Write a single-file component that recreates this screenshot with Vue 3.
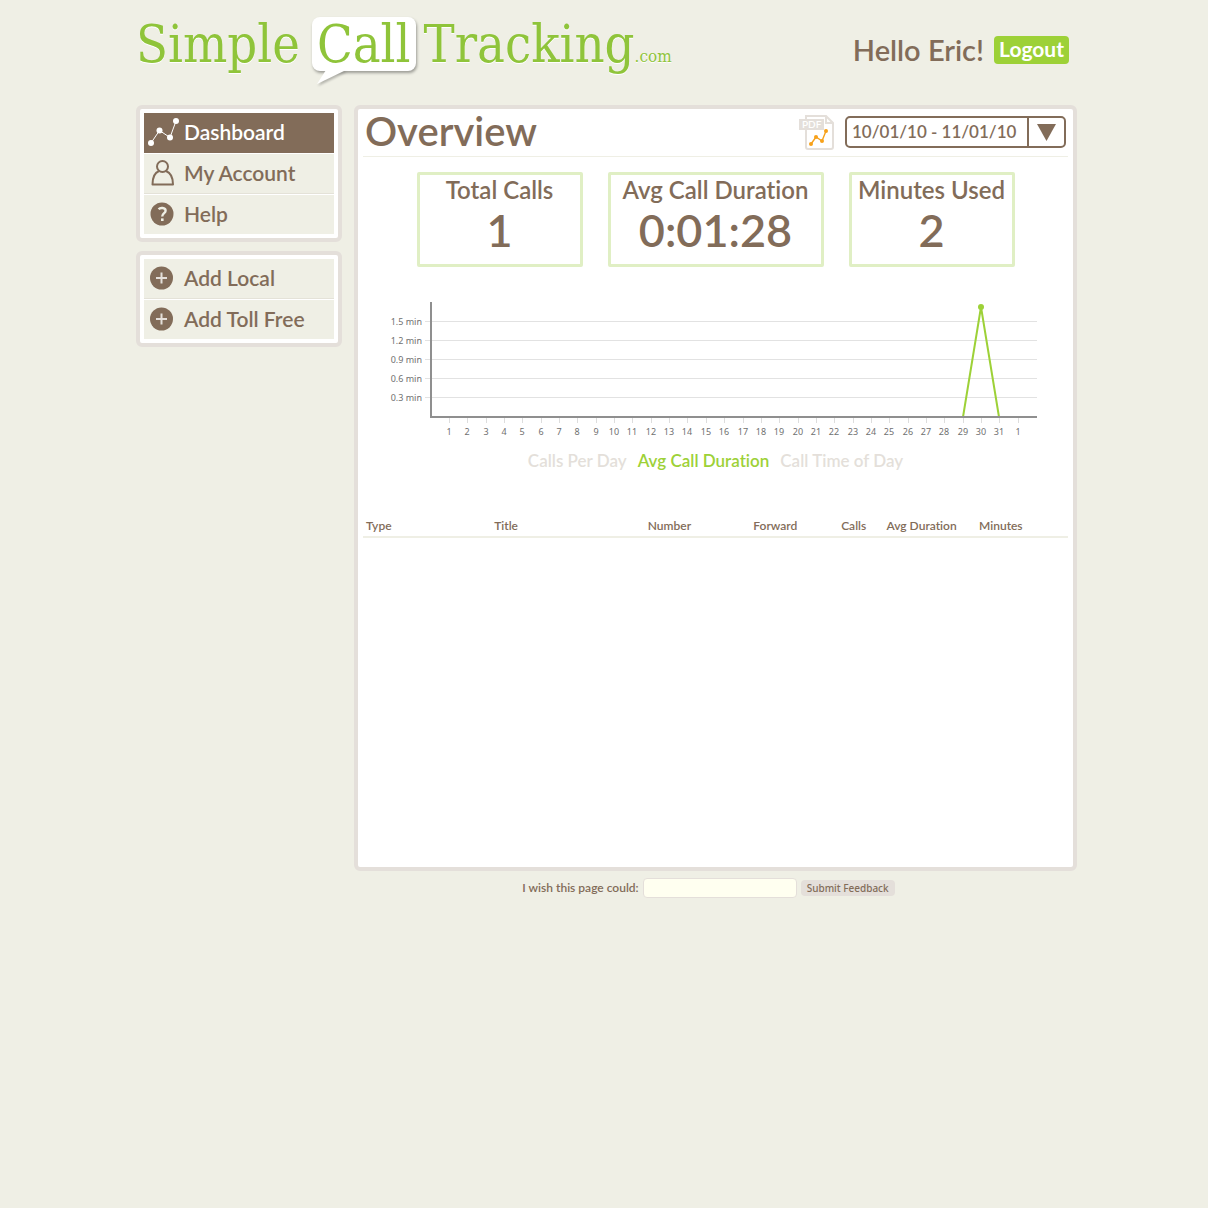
<template>
  <div class="page">
    <header class="header">
      <a class="logo" href="#" aria-label="SimpleCallTracking.com">
        <span class="logo-word">Simple</span>
        <span class="logo-bubble">
          <span class="logo-word">Call</span>
          <svg class="logo-tail" width="34" height="18" viewBox="0 0 34 18" aria-hidden="true">
            <path d="M10 0 L1 14 L30 0 Z" fill="#fff" />
          </svg>
        </span>
        <span class="logo-word">Tracking</span>
        <span class="logo-com">.com</span>
      </a>
      <div class="user">
        <span class="hello">Hello Eric!</span>
        <a class="logout" href="#">Logout</a>
      </div>
    </header>

    <div class="columns">
      <aside class="sidebar">
        <nav v-for="(group, index) in menus" :key="index" class="menu">
          <a
            v-for="item in group"
            :key="item.label"
            href="#"
            class="menu-item"
            :class="{ active: item.label === activeItem }"
            @click.prevent="activeItem = item.label"
          >
            <svg class="menu-icon" width="32" height="30" viewBox="0 0 32 30" aria-hidden="true">
              <g v-if="item.icon === 'chart'" fill="currentColor">
                <path d="M3 26 L11.5 13.5 L22 20.5 L28 4" fill="none" stroke="currentColor" stroke-width="1" />
                <circle cx="3" cy="26" r="3" />
                <circle cx="11.5" cy="13.5" r="3" />
                <circle cx="22" cy="20.5" r="3" />
                <circle cx="28" cy="4" r="3" />
              </g>
              <g v-else-if="item.icon === 'user'" fill="none" stroke="currentColor" stroke-width="2">
                <circle cx="14.5" cy="8.5" r="5.5" />
                <path d="M11 13 C6 15 4.5 20 4.5 26.5 L25 26.5 C25 20 23 15 18 13" stroke-linejoin="round" />
              </g>
              <g v-else-if="item.icon === 'help'">
                <circle cx="14" cy="15" r="11.5" fill="currentColor" />
                <path
                  d="M10.6 10.2 C12 8.6 17.6 8.2 17.6 11.8 C17.6 14.2 14.2 14.2 14.2 17.6"
                  fill="none"
                  stroke="#efefe5"
                  stroke-width="2.4"
                />
                <rect x="13" y="19.4" width="2.6" height="2.6" fill="#efefe5" />
              </g>
              <g v-else>
                <circle cx="13.5" cy="15" r="11.5" fill="currentColor" />
                <path d="M8 15 H19 M13.5 9.5 V20.5" fill="none" stroke="#e4dfda" stroke-width="2" />
              </g>
            </svg>
            <span class="menu-label">{{ item.label }}</span>
          </a>
        </nav>
      </aside>

      <div class="content">
        <main class="panel">
          <div class="title-bar">
            <h1>Overview</h1>
            <a class="pdf" href="#" aria-label="Export PDF">
              <svg width="36" height="36" viewBox="0 0 36 36" aria-hidden="true">
                <path d="M7 2 H27 L34 9 V33 Q34 35 32 35 H9 Q7 35 7 33 Z" fill="#fff" stroke="#e4dfda" stroke-width="2" />
                <path d="M27 2 V9 H34" fill="none" stroke="#e4dfda" stroke-width="2" />
                <rect x="0" y="5" width="25" height="11" fill="#e4dfda" />
                <text x="3" y="14" class="pdf-text">PDF</text>
                <path d="M12 30 L17 23 L23 27 L27 17" fill="none" stroke="#f7a11a" stroke-width="1.4" />
                <g fill="#f7a11a">
                  <circle cx="12" cy="30" r="2" />
                  <circle cx="17" cy="23" r="2" />
                  <circle cx="23" cy="27" r="2" />
                  <circle cx="27" cy="17" r="2" />
                </g>
              </svg>
            </a>
            <div class="range">
              <select v-model="range" aria-label="Date range">
                <option>10/01/10 - 11/01/10</option>
              </select>
              <svg class="range-arrow" width="38" height="28" viewBox="0 0 38 28" aria-hidden="true">
                <path d="M1 0 V28" stroke="#826c59" stroke-width="2" />
                <path d="M10 6 H29 L19.5 23 Z" fill="#826c59" />
              </svg>
            </div>
          </div>

          <div class="stats">
            <section v-for="stat in stats" :key="stat.label" class="stat" :class="{ wide: stat.wide }">
              <h2>{{ stat.label }}</h2>
              <p>{{ stat.value }}</p>
            </section>
          </div>

          <svg class="chart" viewBox="0 0 705 146" role="img" aria-label="Avg Call Duration">
            <g v-for="line in gridLines" :key="line.label">
              <rect x="62" :y="line.y" width="612" height="1" fill="#e2e2e2" />
              <text x="59" :y="line.y + 4" text-anchor="end">{{ line.label }}</text>
            </g>
            <g v-for="day in days" :key="day.x">
              <rect :x="day.x" y="122" width="1" height="5" fill="#dddddd" />
              <text :x="day.x" y="139" text-anchor="middle">{{ day.label }}</text>
            </g>
            <polyline :points="series" fill="none" stroke="#9dd137" stroke-width="2" />
            <circle cx="618" cy="11" r="3" fill="#9dd137" />
            <path d="M68 6 V121 H674" fill="none" stroke="#8f8f8f" stroke-width="2" />
          </svg>

          <div class="tabs">
            <button
              v-for="tab in tabs"
              :key="tab"
              type="button"
              :class="{ active: tab === activeTab }"
              @click="activeTab = tab"
            >{{ tab }}</button>
          </div>

          <table class="numbers">
            <thead>
              <tr>
                <th v-for="col in columns" :key="col.label" :style="{ width: col.width }">{{ col.label }}</th>
              </tr>
            </thead>
          </table>
        </main>

        <form class="feedback" @submit.prevent>
          <label for="wish">I wish this page could:</label>
          <input id="wish" v-model="wish" type="text" />
          <button type="submit">Submit Feedback</button>
        </form>
      </div>
    </div>
  </div>
</template>

<script setup>
import { ref } from 'vue'

const activeItem = ref('Dashboard')
const activeTab = ref('Avg Call Duration')
const range = ref('10/01/10 - 11/01/10')
const wish = ref('')

const menus = [
  [
    { label: 'Dashboard', icon: 'chart' },
    { label: 'My Account', icon: 'user' },
    { label: 'Help', icon: 'help' }
  ],
  [
    { label: 'Add Local', icon: 'plus' },
    { label: 'Add Toll Free', icon: 'plus' }
  ]
]

const stats = [
  { label: 'Total Calls', value: '1' },
  { label: 'Avg Call Duration', value: '0:01:28', wide: true },
  { label: 'Minutes Used', value: '2' }
]

const tabs = ['Calls Per Day', 'Avg Call Duration', 'Call Time of Day']

const columns = [
  { label: 'Type', width: '18.3%' },
  { label: 'Title', width: '22%' },
  { label: 'Number', width: '15%' },
  { label: 'Forward', width: '12.4%' },
  { label: 'Calls', width: '6.2%' },
  { label: 'Avg Duration', width: '13.1%' },
  { label: 'Minutes', width: '13%' }
]

// chart geometry
const gridLines = ['1.5 min', '1.2 min', '0.9 min', '0.6 min', '0.3 min'].map((label, i) => ({
  label,
  y: 25 + i * 19
}))

const dayX = (i) => Math.round(86 + (i * 532) / 29)

const days = Array.from({ length: 32 }, (_, i) => ({
  label: i < 31 ? i + 1 : 1,
  x: dayX(i)
}))

const series = `${dayX(28)},121 ${dayX(29)},11 ${dayX(30)},121`
</script>

<style>
body {
  background: #efefe5;
}
</style>

<style scoped>
.page {
  box-sizing: border-box;
  max-width: 946px;
  margin: 0 auto;
  padding-left: 5px;
  color: #826c59;
  font-family: Lato, "Open Sans", sans-serif;
  font-weight: 600;
  font-variant-ligatures: none;
}

a {
  color: inherit;
  text-decoration: none;
}

/* header */
.header {
  display: flex;
  justify-content: space-between;
  align-items: flex-start;
  padding: 17px 8px 0 0;
  height: 88px;
}

.logo {
  display: flex;
  align-items: baseline;
  color: #8fc43a;
  font-family: "DejaVu Serif Condensed", "DejaVu Serif", serif;
  font-stretch: condensed;
  font-weight: 400;
  text-shadow: 0 1px 0 #fff;
}

.logo-word {
  font-size: 52px;
  line-height: 54px;
}

.logo-bubble {
  position: relative;
  margin: 0 8px 0 12px;
  padding: 0 5px;
  border-radius: 8px;
  background: #fff;
  box-shadow: 1px 2px 3px rgba(0, 0, 0, 0.35);
}

.logo-tail {
  position: absolute;
  left: 4px;
  top: 53px;
  filter: drop-shadow(1px 2px 1px rgba(0, 0, 0, 0.25));
}

.logo-com {
  font-size: 17px;
}

.user {
  display: flex;
  align-items: center;
  gap: 10px;
  padding-top: 17px;
}

.hello {
  font-size: 29px;
  line-height: 32px;
}

.logout {
  padding: 0 5px 2px;
  border-radius: 4px;
  background: #9dd137;
  color: #fff;
  font-size: 21px;
  font-weight: 700;
  line-height: 26px;
}

/* columns */
.columns {
  display: flex;
  align-items: flex-start;
  gap: 12px;
}

.sidebar {
  display: flex;
  flex-direction: column;
  flex: none;
  gap: 9px;
  width: 206px;
}

.menu {
  display: flex;
  flex-direction: column;
  gap: 1px;
  padding: 4px;
  border: 4px solid #e4dfda;
  border-radius: 6px;
  background: #fff;
}

.menu-item {
  display: flex;
  align-items: center;
  gap: 4px;
  box-sizing: border-box;
  height: 40px;
  padding: 0 0 2px 4px;
  border-bottom: 1px solid #e4e2d8;
  background: #efefe5;
  font-size: 21px;
}

.menu-item:last-child {
  height: 39px;
  border-bottom: 0;
}

.menu-item.active {
  border-color: #826c59;
  background: #826c59;
  color: #fff;
}

.menu-label {
  padding-bottom: 1px;
}

.content {
  flex: 1;
  min-width: 0;
}

.panel {
  box-sizing: border-box;
  min-height: 766px;
  padding: 0 5px;
  border: 4px solid #e4dfda;
  border-radius: 6px;
  background: #fff;
}

/* title bar */
.title-bar {
  display: flex;
  align-items: center;
  height: 45px;
  padding: 0 2px 2px;
  border-bottom: 1px solid #efefe5;
}

h1 {
  flex: 1;
  margin: 0;
  font-size: 40px;
  font-weight: 600;
  line-height: 45px;
}

.pdf {
  display: flex;
  margin-right: 10px;
}

.pdf-text {
  fill: #fff;
  font-size: 10px;
}

.range {
  position: relative;
}

.range select {
  display: block;
  box-sizing: border-box;
  width: 221px;
  height: 32px;
  padding: 0 38px 0 5px;
  border: 2px solid #826c59;
  border-radius: 5px;
  appearance: none;
  background: #fff;
  color: inherit;
  font-family: inherit;
  font-size: 17px;
  font-weight: 600;
}

.range-arrow {
  position: absolute;
  top: 2px;
  right: 1px;
  pointer-events: none;
}

/* stats */
.stats {
  display: flex;
  justify-content: center;
  gap: 25px;
  margin-top: 15px;
}

.stat {
  box-sizing: border-box;
  width: 166px;
  height: 95px;
  border: 3px solid #e0efc4;
  border-radius: 2px;
  text-align: center;
}

.stat.wide {
  width: 216px;
}

.stat h2 {
  margin: 1px 0 0;
  font-size: 24px;
  font-weight: 600;
  line-height: 28px;
  white-space: nowrap;
}

.stat p {
  margin: 0;
  font-size: 45px;
  line-height: 52px;
}

/* chart */
.chart {
  display: block;
  width: 100%;
  margin-top: 29px;
}

.chart text {
  fill: #707070;
  font-family: "Noto Sans", sans-serif;
  font-size: 9px;
  font-weight: 400;
}

.tabs {
  display: flex;
  justify-content: center;
  gap: 11px;
  margin-top: 9px;
}

.tabs button {
  padding: 0;
  border: 0;
  background: none;
  color: #e4dfda;
  font-family: inherit;
  font-size: 17px;
  font-variant-ligatures: none;
  font-weight: 600;
  line-height: 20px;
  cursor: pointer;
}

.tabs button.active {
  color: #9dd137;
}

/* numbers table */
.numbers {
  width: 100%;
  margin-top: 46px;
  border-collapse: collapse;
  table-layout: fixed;
}

.numbers th {
  padding: 0 0 1px 3px;
  border-bottom: 2px solid #efefe5;
  font-size: 12px;
  font-weight: 600;
  line-height: 18px;
  text-align: left;
  white-space: nowrap;
}

/* feedback */
.feedback {
  display: flex;
  justify-content: center;
  align-items: center;
  gap: 4px;
  margin-top: 7px;
  padding-right: 14px;
  font-size: 12px;
}

.feedback label {
  padding-bottom: 2px;
}

.feedback input {
  box-sizing: border-box;
  width: 154px;
  height: 20px;
  border: 1px solid #e4dfda;
  border-radius: 4px;
  background: #fffff0;
  color: inherit;
  font: inherit;
}

.feedback button {
  height: 16px;
  padding: 0 6px;
  border: 0;
  border-radius: 4px;
  background: #e4dfda;
  color: inherit;
  font-family: "Noto Sans", sans-serif;
  font-size: 10px;
  font-weight: 500;
  line-height: 16px;
}
</style>
